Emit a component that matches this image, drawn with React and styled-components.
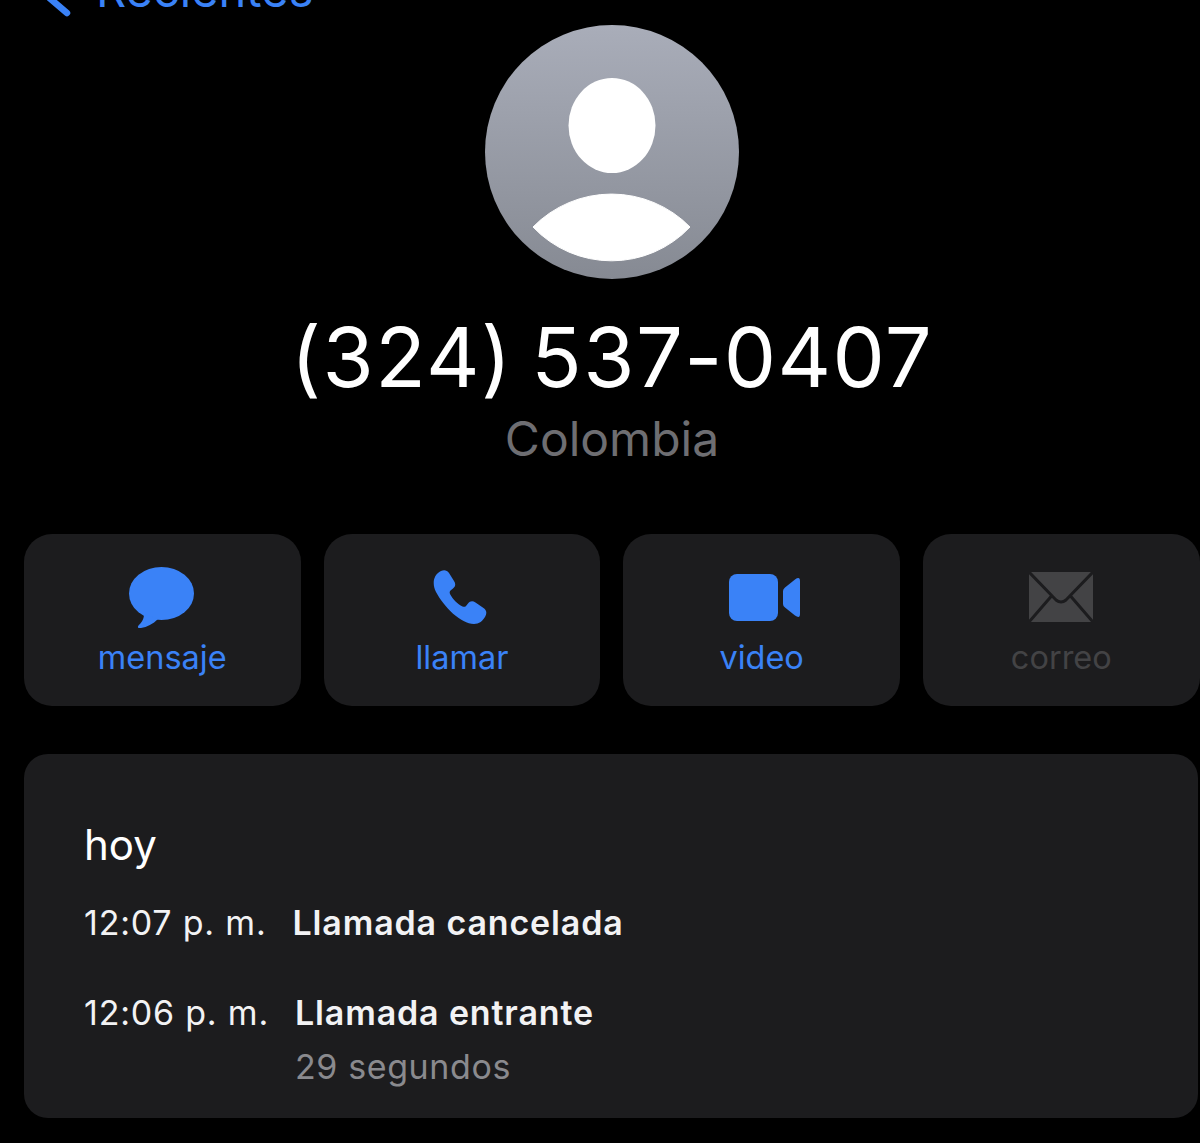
import React from "react";
import styled, { createGlobalStyle } from "styled-components";

const BLUE = "#3a82f7";
const CARD = "#1c1c1e";
const MUTED = "#434345";

const GlobalStyle = createGlobalStyle`
  html, body {
    margin: 0;
    background: #000;
    overflow: hidden;
  }
  body {
    font-family: Inter, "Liberation Sans", sans-serif;
    color: #fff;
  }
`;

const Page = styled.div`
  width: 1200px;
  height: 1143px;
  overflow: hidden;
`;

const BackBar = styled.div`
  height: 25px;
  margin-bottom: -25px;
  padding-left: 47px;
  display: flex;
  align-items: flex-end;
  gap: 25px;
  overflow: hidden;
  color: ${BLUE};
  svg {
    flex: none;
  }
`;

const BackLabel = styled.span`
  font-size: 47px;
  line-height: 48px;
  margin-bottom: 11px;
  flex: none;
`;

const Contact = styled.div`
  display: flex;
  flex-direction: column;
  align-items: center;
  width: 1224px;
  padding-top: 25px;
`;

const AvatarSvg = styled.svg`
  display: block;
  width: 254px;
  height: 254px;
`;

const PhoneNumber = styled.h1`
  margin: 31px 0 0;
  font-size: 83px;
  line-height: 94px;
  letter-spacing: 1.4px;
  word-spacing: -6px;
  font-weight: 400;
  color: #fff;
`;

const Country = styled.div`
  margin-top: 7px;
  font-size: 48px;
  line-height: 56px;
  color: #6e6e72;
`;

const Actions = styled.div`
  display: grid;
  grid-template-columns: repeat(4, 276.5px);
  gap: 23.2px;
  margin: 67px 0 0 24px;
`;

const ActionCard = styled.div`
  height: 172px;
  background: ${CARD};
  border-radius: 28px;
  display: flex;
  flex-direction: column;
  align-items: center;
  padding-top: 32px;
  box-sizing: border-box;
  color: ${props => (props.$disabled ? MUTED : BLUE)};
`;

const IconSlot = styled.div`
  height: 62px;
  display: flex;
  align-items: center;
  justify-content: center;
  margin-left: ${props => props.$shift || 0}px;
  svg {
    display: block;
  }
`;

const ActionLabel = styled.div`
  font-size: 32.5px;
  line-height: 40px;
  margin-top: 10px;
`;

const History = styled.section`
  width: 1174px;
  height: 364px;
  margin: 48px 0 0 24px;
  padding: 61px 0 0 60px;
  box-sizing: border-box;
  background: ${CARD};
  border-radius: 24px;
`;

const DayTitle = styled.div`
  font-size: 42px;
  line-height: 60px;
`;

const CallRow = styled.div`
  display: flex;
  gap: 26px;
  margin-top: ${props => props.$gap}px;
`;

const CallTime = styled.div`
  font-size: 34px;
  line-height: 44px;
  letter-spacing: 0.8px;
  color: #f2f2f4;
`;

const CallInfo = styled.div`
  display: flex;
  flex-direction: column;
`;

const CallTitle = styled.div`
  font-size: 34px;
  line-height: 44px;
  letter-spacing: 0.85px;
  font-weight: 600;
  color: #f2f2f4;
`;

const CallDuration = styled.div`
  font-size: 34px;
  line-height: 44px;
  letter-spacing: 0.6px;
  margin-top: 10px;
  color: #8a8a8e;
`;

const Chevron = () => (
  <svg width="24" height="25" viewBox="0 0 24 25" fill="none">
    <path d="M-1 -5 L20 13" stroke="currentColor" strokeWidth="6.5" strokeLinecap="round" />
  </svg>
);

const Avatar = () => (
  <AvatarSvg viewBox="0 0 254 254">
    <defs>
      <linearGradient id="avatarFill" x1="0" y1="0" x2="0" y2="1">
        <stop offset="0" stopColor="#a9adb9" />
        <stop offset="1" stopColor="#868a93" />
      </linearGradient>
    </defs>
    <circle cx="127" cy="127" r="127" fill="url(#avatarFill)" />
    <ellipse cx="127" cy="100.5" rx="43.5" ry="47.5" fill="#fff" />
    <path d="M48 202 A110 110 0 0 1 205 202 A108 108 0 0 1 48 202 Z" fill="#fff" stroke="#fff" strokeWidth="1" strokeLinejoin="round" />
  </AvatarSvg>
);

const MessageIcon = () => (
  <svg width="65" height="61" viewBox="0 0 65 61" fill="currentColor">
    <ellipse cx="32.5" cy="26.5" rx="32.5" ry="26.5" />
    <path d="M15 47 C15 53 12 56 9.5 58.5 C8 60.5 9.5 61.5 12 61 C18 60 24 57 29 52 Z" />
  </svg>
);

const PhoneIcon = () => (
  <svg width="54" height="54" viewBox="0 0 54 54" fill="currentColor">
    <path d="M8 1 C11 -0.5 14 0 16 3 L21 11 C23 14 22.5 16.5 20 18.5 L17.5 20.5 C16.5 21.5 16.5 22.5 17 24 C19.5 29 24.5 34 29.5 36.5 C31 37 32 37 33 36 L35 33.5 C37 31 39.5 30.5 42.5 32.5 L50.5 38 C53.5 40 54 43 52.5 46 C50 51 46 54 41 54 C28 54 11 37 3 22 C-1 14 0 5 8 1 Z" />
  </svg>
);

const VideoIcon = () => (
  <svg width="71" height="47" viewBox="0 0 71 47" fill="currentColor">
    <rect x="0" y="0" width="49" height="47" rx="8" />
    <path d="M54 17 Q54 15 56 13.5 L66 5.5 Q71 2 71 7 V40 Q71 45 66 41.5 L56 33.5 Q54 32 54 30 Z" />
  </svg>
);

const MailIcon = () => (
  <svg width="64" height="50" viewBox="0 0 64 50">
    <rect x="0" y="0" width="64" height="50" rx="2" fill={MUTED} />
    <path d="M0 0 L27 28 Q32 32 37 28 L64 0 M0 50 L22.5 24 M64 50 L41.5 24" fill="none" stroke={CARD} strokeWidth="3" />
  </svg>
);

const actions = [
  { label: "mensaje", icon: <MessageIcon />, shift: -2 },
  { label: "llamar", icon: <PhoneIcon />, shift: -3 },
  { label: "video", icon: <VideoIcon />, shift: 5 },
  { label: "correo", icon: <MailIcon />, disabled: true }
];

const App = () => (
  <Page>
    <GlobalStyle />
    <BackBar>
      <Chevron />
      <BackLabel>Recientes</BackLabel>
    </BackBar>
    <Contact>
      <Avatar />
      <PhoneNumber>(324) 537-0407</PhoneNumber>
      <Country>Colombia</Country>
    </Contact>
    <Actions>
      {actions.map(action => (
        <ActionCard key={action.label} $disabled={action.disabled}>
          <IconSlot $shift={action.shift}>{action.icon}</IconSlot>
          <ActionLabel>{action.label}</ActionLabel>
        </ActionCard>
      ))}
    </Actions>
    <History>
      <DayTitle>hoy</DayTitle>
      <CallRow $gap={26}>
        <CallTime>12:07 p. m.</CallTime>
        <CallInfo>
          <CallTitle>Llamada cancelada</CallTitle>
        </CallInfo>
      </CallRow>
      <CallRow $gap={46}>
        <CallTime>12:06 p. m.</CallTime>
        <CallInfo>
          <CallTitle>Llamada entrante</CallTitle>
          <CallDuration>29 segundos</CallDuration>
        </CallInfo>
      </CallRow>
    </History>
  </Page>
);

export default App;
